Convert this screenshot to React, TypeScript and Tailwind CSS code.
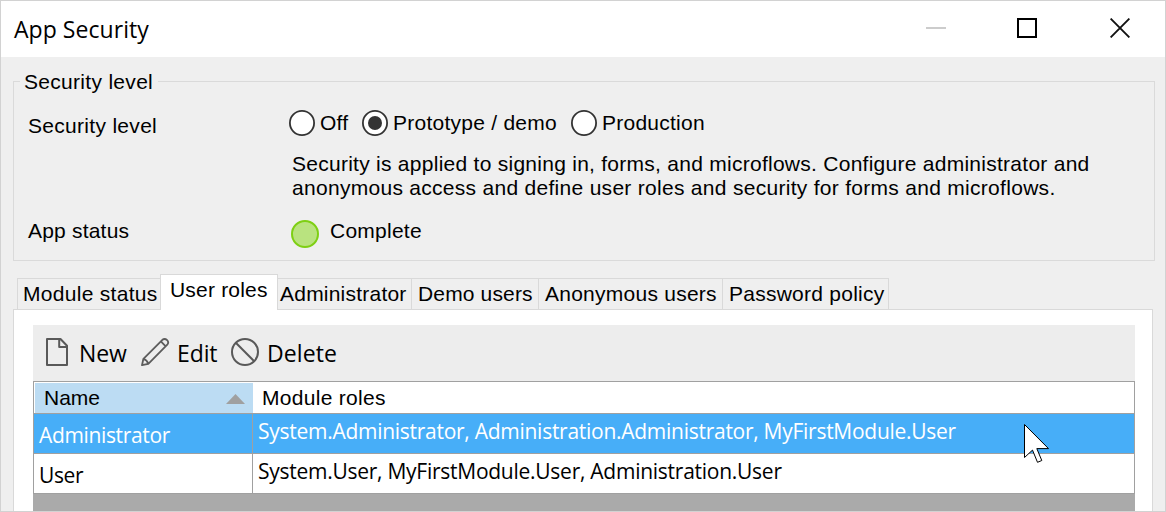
import type { ReactNode } from "react";

const ARIAL = "font-['Liberation_Sans',Arial,sans-serif] text-[21px] leading-[24px] whitespace-nowrap";
const SEGOE = "font-['Open_Sans','Segoe_UI',sans-serif] whitespace-nowrap";

function Radio({ checked, className, children }: { checked?: boolean; className: string; children: ReactNode }) {
  return (
    <label className={`flex h-[26px] shrink-0 items-start ${className}`}>
      <svg width="26" height="26" viewBox="0 0 26 26" className="shrink-0">
        <circle cx="13" cy="13" r="12.1" fill="#fff" stroke="#333" strokeWidth="1.8" />
        {checked && <circle cx="13" cy="13" r="7" fill="#333" />}
      </svg>
      {children}
    </label>
  );
}

function Tab({ className, children }: { className: string; children: ReactNode }) {
  return (
    <div className={`h-[31px] shrink-0 border-t border-[#d9d9d9] pt-[3px] ${ARIAL} ${className}`}>{children}</div>
  );
}

function TitleBar() {
  return (
    <header className="flex h-[56px] shrink-0 bg-white">
      <h1 className={`w-[925px] pt-[12px] pl-[13px] text-[23px] leading-[32px] tracking-[0.05px] ${SEGOE}`}>App Security</h1>
      <svg width="20" height="20" viewBox="0 0 20 20" className="mt-[17px] shrink-0">
        <path d="M0 10h20" stroke="#ccc" strokeWidth="2" />
      </svg>
      <svg width="20" height="20" viewBox="0 0 20 20" className="mt-[17px] ml-[71px] shrink-0">
        <path d="M1 1h18v18H1z" fill="none" stroke="#000" strokeWidth="2" />
      </svg>
      <svg width="20" height="20" viewBox="0 0 20 20" className="mt-[17px] ml-[73px] shrink-0">
        <path d="M.6.6l18.8 18.8M19.4.6L.6 19.4" stroke="#111" strokeWidth="1.9" />
      </svg>
    </header>
  );
}

function SecurityLevel() {
  return (
    <section className="mt-[24px] ml-[12px] h-[180px] w-[1142px] shrink-0 border border-[#dadada]">
      <div className={`-mt-[12px] ml-[6px] w-[138px] bg-[#efefef] pl-[4px] tracking-[0.3px] ${ARIAL}`}>Security level</div>
      <div className="flex h-[125px]">
        <div className={`w-[275px] shrink-0 pt-[20px] pl-[14px] tracking-[0.3px] ${ARIAL}`}>Security level</div>
        <div className="pt-[16px]">
          <div className="flex">
            <Radio className="w-[73px]">
              <span className={`mt-px ml-[5px] tracking-[0.2px] ${ARIAL}`}>Off</span>
            </Radio>
            <Radio checked className="w-[209px]">
              <span className={`mt-px ml-[5px] tracking-[0.25px] ${ARIAL}`}>Prototype / demo</span>
            </Radio>
            <Radio className="w-[140px]">
              <span className={`mt-px ml-[5px] tracking-[0.25px] ${ARIAL}`}>Production</span>
            </Radio>
          </div>
          <div className={`mt-[16px] ml-[3px] ${ARIAL}`}>
            <div className="tracking-[0.265px]">Security is applied to signing in, forms, and microflows. Configure administrator and</div>
            <div className="tracking-[0.29px]">anonymous access and define user roles and security for forms and microflows.</div>
          </div>
        </div>
      </div>
      <div className="flex">
        <div className={`w-[277px] shrink-0 pl-[14px] tracking-[0.2px] ${ARIAL}`}>App status</div>
        <svg width="28" height="28" viewBox="0 0 28 28" className="mt-px shrink-0">
          <circle cx="14" cy="14" r="13" fill="#b9e37f" stroke="#7ecf14" strokeWidth="2" />
        </svg>
        <div className={`ml-[11px] tracking-[0.25px] ${ARIAL}`}>Complete</div>
      </div>
    </section>
  );
}

function Tabs() {
  return (
    <nav className="mt-[13px] ml-[16px] flex h-[35px] shrink-0 items-end">
      <Tab className="w-[143px] border-l pl-[5px] tracking-[0.3px]">Module status</Tab>
      <div className={`relative z-10 -mb-px h-[36px] w-[118px] shrink-0 border-x border-t border-[#d9d9d9] bg-white pt-[3px] pl-[9px] tracking-[0.2px] ${ARIAL}`}>
        User roles
      </div>
      <Tab className="w-[133px] pl-[2px] tracking-[0.22px]">Administrator</Tab>
      <Tab className="w-[127px] border-l pl-[6px] tracking-[0.15px]">Demo users</Tab>
      <Tab className="w-[184px] border-l pl-[6px] tracking-[0.25px]">Anonymous users</Tab>
      <Tab className="w-[167px] border-x pl-[6px] tracking-[0.25px]">Password policy</Tab>
    </nav>
  );
}

function Toolbar() {
  const label = `text-[23px] leading-[32px] ${SEGOE}`;
  return (
    <div className="flex h-[56px] shrink-0 bg-[#ededed]">
      <svg width="24" height="30" viewBox="0 0 24 30" className="mt-[12px] ml-[12px] shrink-0" fill="none" stroke="#595959" strokeWidth="2" strokeLinejoin="round">
        <path d="M2 2h13.5l6.5 6.7V28H2zM14.2 2v7.9H22" />
      </svg>
      <span className={`mt-[12px] ml-[10px] w-[60px] tracking-[-0.1px] ${label}`}>New</span>
      <svg width="30" height="30" viewBox="0 0 30 30" className="mt-[12px] ml-px shrink-0" fill="none" stroke="#5c5c5c" strokeWidth="1.8" strokeLinejoin="round">
        <path d="M2 28.2l1.4-6.4L22.4 2.8q2.4-1.8 4.7.4 2.1 2.2.2 4.5L8.3 26.8zM3.4 21.8q3.6 1 4.9 5M20.9 4.4l4.8 4.9" />
      </svg>
      <span className={`mt-[12px] ml-[7px] w-[52px] tracking-[-0.1px] ${label}`}>Edit</span>
      <svg width="30" height="30" viewBox="0 0 30 30" className="mt-[12px] ml-px shrink-0" fill="none" stroke="#595959" strokeWidth="2">
        <circle cx="15" cy="15" r="13" />
        <path d="M5.8 5.8l18.4 18.4" />
      </svg>
      <span className={`mt-[12px] ml-[7px] tracking-[0.1px] ${label}`}>Delete</span>
    </div>
  );
}

function RolesTable() {
  const cell = `text-[21px] leading-[30px] ${SEGOE}`;
  return (
    <div className="flex grow flex-col bg-[#aaa]">
      <div className="border-x border-t border-[#a0a0a0] bg-white">
        <div className="flex h-[31px] pt-px pl-px">
          <div className="flex w-[218px] shrink-0 bg-[#bcdcf3]">
            <span className={`w-[191px] pt-[3px] pl-[9px] tracking-[0px] ${ARIAL}`}>Name</span>
            <svg width="19" height="10" viewBox="0 0 19 10" className="mt-[11px]">
              <path d="M0 10L9.5 0 19 10z" fill="#a0a0a0" />
            </svg>
          </div>
          <span className={`pt-[3px] pl-[9px] tracking-[0.3px] ${ARIAL}`}>Module roles</span>
        </div>
        <div className="flex h-[40px] border-t border-[#a0a0a0] bg-[#47aef8] text-white">
          <div className={`w-[218px] shrink-0 pt-[6px] pl-[5px] tracking-[-0.35px] ${cell}`}>Administrator</div>
          <div className={`grow border-l border-[#a0a0a0] pt-[2px] pl-[5px] tracking-[-0.27px] ${cell}`}>
            System.Administrator, Administration.Administrator, MyFirstModule.User
          </div>
        </div>
        <div className="flex h-[41px] border-y border-[#a0a0a0]">
          <div className={`w-[218px] shrink-0 pt-[6px] pl-[5px] tracking-[-0.35px] ${cell}`}>User</div>
          <div className={`grow border-l border-[#a0a0a0] pt-[2px] pl-[5px] tracking-[-0.26px] ${cell}`}>
            System.User, MyFirstModule.User, Administration.User
          </div>
        </div>
      </div>
    </div>
  );
}

export default function App() {
  return (
    <div className="relative flex h-[512px] w-[1166px] flex-col overflow-hidden border border-[#d2d2d2] bg-[#efefef] text-black">
      <TitleBar />
      <SecurityLevel />
      <Tabs />
      <section className="ml-[12px] flex w-[1140px] grow flex-col border-x border-t border-[#d9d9d9] bg-white pt-[15px] pr-[17px] pl-[19px]">
        <Toolbar />
        <RolesTable />
      </section>
      <svg width="28" height="42" viewBox="0 0 28 42" className="absolute top-[422px] left-[1022px]">
        <path d="M1.5 1.5v33l8-7.4 5 12.2 4.3-1.8-5-11.9h11.7z" fill="#fff" stroke="#000" strokeWidth="1" />
      </svg>
    </div>
  );
}
